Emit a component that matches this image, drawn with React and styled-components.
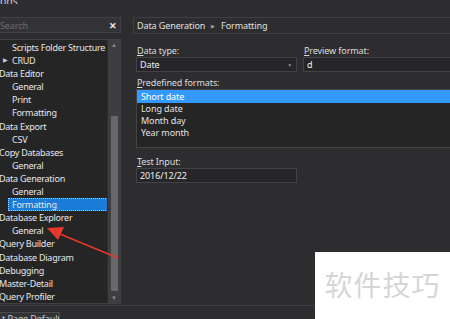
import React from "react";
import styled, { createGlobalStyle } from "styled-components";

const GlobalStyle = createGlobalStyle`
  html, body {
    margin: 0;
    padding: 0;
    background: #2d2d30;
    overflow: hidden;
  }
  body {
    font-family: "Noto Sans", "Liberation Sans", sans-serif;
    font-size: 9px;
    letter-spacing: -0.1px;
    color: #e6e6e6;
  }
`;

const Window = styled.div`
  position: relative;
  width: 450px;
  height: 319px;
  overflow: hidden;
  background: #2d2d30;
  display: flex;
  flex-direction: column;
`;

const Title = styled.div`
  flex-shrink: 0;
  height: 8px;
  line-height: 10px;
  margin-top: -4px;
  font-size: 10.5px;
  color: #d0d0d0;
  overflow: hidden;
`;

const Body = styled.div`
  flex-shrink: 0;
  display: flex;
  margin-top: 13px;
  height: 287px;
`;

const LeftColumn = styled.div`
  width: 121px;
  display: flex;
  flex-direction: column;
  gap: 6px;
`;

const SearchBox = styled.div`
  height: 16px;
  flex-shrink: 0;
  box-sizing: border-box;
  background: #333337;
  border: 1px solid #3f3f46;
  border-left: none;
  display: flex;
  align-items: center;
  justify-content: space-between;
  padding: 0 3px 0 0;
  color: #6d6d70;
`;

const ClearIcon = styled.span`
  color: #e8e8e8;
  font-size: 9px;
  font-weight: bold;
`;

const TreePanel = styled.div`
  height: 265px;
  flex-shrink: 0;
  display: flex;
  background: #252526;
  border: 1px solid #3f3f46;
  border-left: none;
  box-sizing: border-box;
  overflow: hidden;
`;

const TreeList = styled.div`
  flex: 1;
  padding-top: 1px;
  overflow: hidden;
  letter-spacing: -0.25px;
`;

const TreeRow = styled.div`
  height: 13.1px;
  line-height: 13px;
  white-space: nowrap;
  padding-left: ${(p) => (p.$child ? 12 : 0)}px;
  margin-left: ${(p) => (p.$child ? 0 : -1)}px;
  position: relative;
`;

const RowLabel = styled.span`
  display: inline-block;
  padding: 0 2px 0 0;
  ${(p) =>
    p.$selected &&
    `
    background: #1a7bd8;
    outline: 1px dotted #9fd0ff;
    outline-offset: -1px;
    width: 96px;
    margin-left: -4px;
    padding-left: 4px;
  `}
`;

const Expander = styled.span`
  position: absolute;
  left: 3px;
  top: 0;
  font-size: 6px;
  color: #cfcfcf;
`;

const Scrollbar = styled.div`
  width: 12px;
  display: flex;
  flex-direction: column;
  align-items: center;
  background: #3e3e42;
  border-left: 1px solid #2d2d30;
`;

const ScrollArrow = styled.div`
  height: 10px;
  font-size: 6px;
  line-height: 10px;
  color: #8a8a8d;
`;

const ScrollTrack = styled.div`
  flex: 1;
  width: 100%;
  display: flex;
  flex-direction: column;
  align-items: center;
`;

const ScrollThumb = styled.div`
  width: 7px;
  margin-top: 66px;
  flex: 1;
  margin-bottom: 2px;
  background: #686868;
`;

const RightColumn = styled.div`
  flex: 1;
  margin-left: 12px;
  display: flex;
  flex-direction: column;
`;

const Breadcrumb = styled.div`
  height: 17px;
  box-sizing: border-box;
  border: 1px solid #3f3f46;
  border-right: none;
  display: flex;
  align-items: center;
  gap: 6px;
  padding-left: 3px;
  color: #e0e0e0;
`;

const Caret = styled.span`
  font-size: 5px;
  color: #a5a5a5;
`;

const Form = styled.div`
  padding-left: 3px;
  margin-top: 10px;
  display: flex;
  flex-direction: column;
`;

const FieldRow = styled.div`
  display: flex;
  gap: 6px;
`;

const Field = styled.div`
  display: flex;
  flex-direction: column;
  width: ${(p) => p.$width || "auto"};
  flex: ${(p) => (p.$grow ? 1 : "none")};
`;

const Label = styled.div`
  height: 13px;
  line-height: 13px;
  margin-left: 1px;
  margin-top: ${(p) => p.$gap || 0}px;
  color: #dcdcdc;
  u {
    text-decoration-color: #dcdcdc;
  }
`;

const InputBox = styled.div`
  height: 15px;
  box-sizing: border-box;
  background: #262628;
  border: 1px solid #434346;
  ${(p) => p.$open && "border-right: none;"}
  display: flex;
  align-items: center;
  justify-content: space-between;
  padding: 0 4px 0 3px;
  color: #efefef;
`;

const DropArrow = styled.span`
  font-size: 5px;
  color: #8a8a8d;
`;

const ListBox = styled.div`
  height: 59px;
  box-sizing: border-box;
  background: #252526;
  border: 1px solid #434346;
  border-right: none;
`;

const ListItem = styled.div`
  height: ${(p) => (p.$selected ? 13 : 12)}px;
  line-height: ${(p) => (p.$selected ? 13 : 12)}px;
  padding-left: 4px;
  background: ${(p) => (p.$selected ? "#3399ff" : "transparent")};
  color: ${(p) => (p.$selected ? "#ffffff" : "#e2e2e2")};
`;

const Footer = styled.div`
  margin-top: 1px;
  border-top: 1px solid #3f3f46;
  flex: 1;
  min-height: 0;
  overflow: hidden;
  display: flex;
`;

const FooterButton = styled.div`
  margin-top: 6px;
  width: 60px;
  height: 14px;
  box-sizing: border-box;
  border: 1px solid #4a4a4e;
  border-left: none;
  background: #333337;
  line-height: 11px;
  padding-left: 2px;
  font-size: 9px;
  color: #c8c8c8;
  white-space: nowrap;
  overflow: hidden;
`;

const Overlay = styled.svg`
  position: absolute;
  left: 0;
  top: 0;
  pointer-events: none;
`;

const Watermark = styled.div`
  position: absolute;
  left: 315px;
  top: 252px;
  width: 135px;
  height: 67px;
  background: #ffffff;
  display: flex;
  align-items: center;
  justify-content: center;
  padding-bottom: 4px;
  box-sizing: border-box;
  font-family: "Noto Sans CJK SC", sans-serif;
  font-size: 28px;
  letter-spacing: 1px;
  color: #d6d6d6;
`;

const tree = [
  { label: "Scripts Folder Structure", child: true },
  { label: "CRUD", child: true, expander: true },
  { label: "Data Editor" },
  { label: "General", child: true },
  { label: "Print", child: true },
  { label: "Formatting", child: true },
  { label: "Data Export" },
  { label: "CSV", child: true },
  { label: "Copy Databases" },
  { label: "General", child: true },
  { label: "Data Generation" },
  { label: "General", child: true },
  { label: "Formatting", child: true, selected: true },
  { label: "Database Explorer" },
  { label: "General", child: true },
  { label: "Query Builder" },
  { label: "Database Diagram" },
  { label: "Debugging" },
  { label: "Master-Detail" },
  { label: "Query Profiler" },
];

const formats = ["Short date", "Long date", "Month day", "Year month"];

export default function App() {
  return (
    <>
      <GlobalStyle />
      <Window>
        <Title>ons</Title>
        <Body>
          <LeftColumn>
            <SearchBox>
              <span>Search</span>
              <ClearIcon>✕</ClearIcon>
            </SearchBox>
            <TreePanel>
              <TreeList>
                {tree.map((item, i) => (
                  <TreeRow key={i} $child={item.child}>
                    {item.expander && <Expander>▶</Expander>}
                    <RowLabel $selected={item.selected}>{item.label}</RowLabel>
                  </TreeRow>
                ))}
              </TreeList>
              <Scrollbar>
                <ScrollArrow>▲</ScrollArrow>
                <ScrollTrack>
                  <ScrollThumb />
                </ScrollTrack>
                <ScrollArrow>▼</ScrollArrow>
              </Scrollbar>
            </TreePanel>
          </LeftColumn>
          <RightColumn>
            <Breadcrumb>
              <span>Data Generation</span>
              <Caret>▶</Caret>
              <span>Formatting</span>
            </Breadcrumb>
            <Form>
              <FieldRow>
                <Field $width="161px">
                  <Label>
                    <u>D</u>ata type:
                  </Label>
                  <InputBox>
                    <span>Date</span>
                    <DropArrow>▼</DropArrow>
                  </InputBox>
                </Field>
                <Field $grow>
                  <Label>
                    <u>P</u>review format:
                  </Label>
                  <InputBox $open>
                    <span>d</span>
                  </InputBox>
                </Field>
              </FieldRow>
              <Label $gap={4}>
                <u>P</u>redefined formats:
              </Label>
              <ListBox>
                {formats.map((f, i) => (
                  <ListItem key={f} $selected={i === 0}>
                    {f}
                  </ListItem>
                ))}
              </ListBox>
              <Label $gap={7}>
                <u>T</u>est Input:
              </Label>
              <Field $width="161px">
                <InputBox>
                  <span>2016/12/22</span>
                </InputBox>
              </Field>
            </Form>
          </RightColumn>
        </Body>
        <Footer>
          <FooterButton>t Page Default</FooterButton>
        </Footer>
        <Overlay width="450" height="319" viewBox="0 0 450 319">
          <line x1="118" y1="258" x2="60" y2="234" stroke="#e8372c" strokeWidth="1.6" />
          <polygon points="47,228 64,227 58,240" fill="#e8372c" />
        </Overlay>
        <Watermark>软件技巧</Watermark>
      </Window>
    </>
  );
}
